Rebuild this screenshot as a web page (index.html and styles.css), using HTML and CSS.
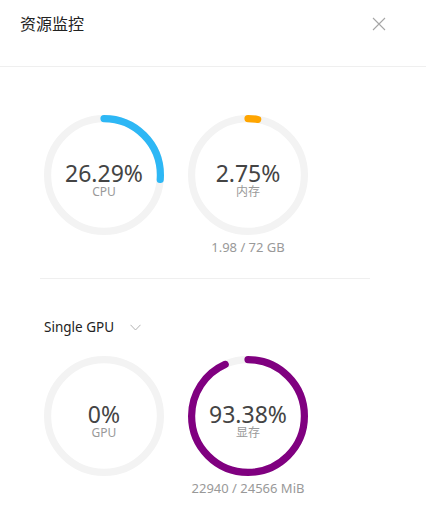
FILE: index.html
```html
<!DOCTYPE html>
<html>
<head>
    <title>资源监控</title>
    <link rel="stylesheet" href="styles.css">
</head>
<body>
    <div class="drawer">
        <div class="drawer-header">
            <span class="drawer-title">资源监控</span>
            <svg class="close" width="14" height="14" viewBox="0 0 14 14">
                <path d="M1 1 L13 13 M13 1 L1 13" stroke="#a6a6a6" stroke-width="1.1" fill="none"/>
            </svg>
        </div>

        <div class="drawer-body">
            <div class="ring-row">
                <div class="ring-item">
                    <div class="ring">
                        <svg viewBox="0 0 100 100">
                            <circle class="track" cx="50" cy="50" r="47"/>
                            <circle class="bar" cx="50" cy="50" r="47" pathLength="100" stroke="#2db7f5" stroke-dasharray="26.29 100"/>
                        </svg>
                        <div class="ring-text">
                            <span class="value">26.29%</span>
                            <span class="label">CPU</span>
                        </div>
                    </div>
                </div>
                <div class="ring-item">
                    <div class="ring">
                        <svg viewBox="0 0 100 100">
                            <circle class="track" cx="50" cy="50" r="47"/>
                            <circle class="bar" cx="50" cy="50" r="47" pathLength="100" stroke="#ffa500" stroke-dasharray="2.75 100"/>
                        </svg>
                        <div class="ring-text">
                            <span class="value">2.75%</span>
                            <span class="label">内存</span>
                        </div>
                    </div>
                    <div class="caption">1.98 / 72 GB</div>
                </div>
            </div>

            <div class="divider"></div>

            <div class="gpu-select">
                <span>Single GPU</span>
                <svg width="11" height="7" viewBox="0 0 11 7">
                    <path d="M0.5 0.8 L5.5 6 L10.5 0.8" stroke="#b3b3b3" stroke-width="1" fill="none"/>
                </svg>
            </div>

            <div class="ring-row">
                <div class="ring-item">
                    <div class="ring">
                        <svg viewBox="0 0 100 100">
                            <circle class="track" cx="50" cy="50" r="47"/>
                        </svg>
                        <div class="ring-text">
                            <span class="value">0%</span>
                            <span class="label">GPU</span>
                        </div>
                    </div>
                </div>
                <div class="ring-item">
                    <div class="ring">
                        <svg viewBox="0 0 100 100">
                            <circle class="track" cx="50" cy="50" r="47"/>
                            <circle class="bar" cx="50" cy="50" r="47" pathLength="100" stroke="#800080" stroke-dasharray="93.38 100"/>
                        </svg>
                        <div class="ring-text">
                            <span class="value">93.38%</span>
                            <span class="label">显存</span>
                        </div>
                    </div>
                    <div class="caption">22940 / 24566 MiB</div>
                </div>
            </div>
        </div>
    </div>
</body>
</html>
```

FILE: styles.css
```css
body {
    margin: 0;
    padding: 0;
    background-color: #fff;
    font-family: "Noto Sans", "Noto Sans CJK SC", sans-serif;
    color: #444;
}

.drawer {
    width: 426px;
}

.drawer-header {
    height: 67px;
    box-sizing: border-box;
    border-bottom: 1px solid #efefef;
    padding: 12px 40px 0 20px;
    display: flex;
    justify-content: space-between;
    align-items: flex-start;
}

.drawer-title {
    font-size: 16px;
    line-height: 24px;
    color: #222;
}

.close {
    margin-top: 5px;
}

.drawer-body {
    padding: 48px 0 0 44px;
}

.ring-row {
    display: flex;
    gap: 24px;
}

.ring-item {
    width: 120px;
    display: flex;
    flex-direction: column;
    align-items: center;
}

.ring {
    position: relative;
    width: 120px;
    height: 120px;
}

.ring svg {
    display: block;
    width: 120px;
    height: 120px;
    transform: rotate(-90deg);
}

.track {
    fill: none;
    stroke: #f3f3f3;
    stroke-width: 6;
}

.bar {
    fill: none;
    stroke-width: 6;
    stroke-linecap: round;
}

.ring-text {
    position: absolute;
    inset: 0;
    padding-top: 46px;
    display: flex;
    flex-direction: column;
    align-items: center;
}

.value {
    font-size: 23px;
    line-height: 24px;
    color: #444;
}

.label {
    font-size: 12px;
    line-height: 14px;
    color: #999;
}

.caption {
    margin-top: 3px;
    font-size: 13px;
    line-height: 18px;
    color: #999;
}

.divider {
    width: 330px;
    margin: 22px 0 0 -4px;
    border-top: 1px solid #efefef;
}

.gpu-select {
    margin-top: 36px;
    margin-bottom: 17px;
    height: 24px;
    display: flex;
    align-items: center;
    gap: 16px;
    font-size: 13.5px;
    color: #222;
}
```
